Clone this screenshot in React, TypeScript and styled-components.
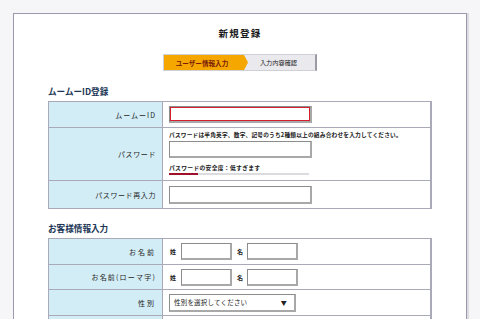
import React from "react";
import styled, { createGlobalStyle } from "styled-components";

const GlobalStyle = createGlobalStyle`
  html, body {
    margin: 0;
    padding: 0;
    background: #f6f6f9;
    font-family: "Noto Sans CJK JP", "Noto Sans", sans-serif;
    color: #1e1e1e;
  }
  #root {
    height: 319px;
    overflow: hidden;
  }
`;

const Card = styled.div`
  margin: 13px 13px 0;
  min-height: 400px;
  background: #fff;
  border: 1px solid #9a9aaa;
  box-shadow: 2px 0 0 #dcdce2;
  padding: 0 34px;
`;

const Title = styled.h1`
  margin: 0;
  padding-top: 12px;
  font-size: 9.5px;
  line-height: 14px;
  font-weight: 700;
  letter-spacing: 1.2px;
  text-align: center;
  color: #1a1a1a;
`;

const Steps = styled.div`
  margin: 14px auto 0;
  width: 154px;
  height: 17px;
  display: flex;
  background: #e9e9ee;
  border: 1px solid #cfcfd6;
  border-right: 2px solid #9a9aa4;
  box-sizing: border-box;
`;

const Step = styled.div<{ $active?: boolean }>`
  display: flex;
  align-items: center;
  justify-content: center;
  height: 100%;
  font-size: ${(p) => (p.$active ? "6.6px" : "6.2px")};
  font-weight: ${(p) => (p.$active ? 700 : 400)};
  color: ${(p) => (p.$active ? "#7a1c08" : "#222")};
  background: ${(p) => (p.$active ? "#f5a700" : "transparent")};
  width: ${(p) => (p.$active ? "84px" : "auto")};
  flex: ${(p) => (p.$active ? "none" : 1)};
  clip-path: ${(p) =>
    p.$active
      ? "polygon(0 0, calc(100% - 4px) 0, 100% 50%, calc(100% - 4px) 100%, 0 100%)"
      : "none"};
  padding-right: ${(p) => (p.$active ? "8px" : "6px")};
  box-sizing: border-box;
`;

const SectionTitle = styled.h2<{ $top: number }>`
  margin: ${(p) => p.$top}px 0 4px;
  font-size: 8.6px;
  line-height: 12px;
  font-weight: 700;
  color: #1b3656;
`;

const FormTable = styled.div`
  border: 1px solid #a9a9b8;
  border-right-width: 2px;
`;

const Row = styled.div<{ $h: number }>`
  display: grid;
  grid-template-columns: 114px 1fr;
  min-height: ${(p) => p.$h}px;
  & + & {
    border-top: 1px solid #a9a9b8;
  }
`;

const Label = styled.div<{ $spread?: number }>`
  background: #d3edf6;
  border-right: 1px solid #a9a9b8;
  display: flex;
  align-items: center;
  justify-content: flex-end;
  padding-right: 6px;
  font-size: 7px;
  letter-spacing: ${(p) => p.$spread ?? 0.6}px;
  color: #1e1e1e;
`;

const Value = styled.div`
  display: flex;
  align-items: center;
  padding: 0 6px;
`;

const Stack = styled.div`
  display: flex;
  flex-direction: column;
  padding: 2px 6px 4px;
`;

const TextBox = styled.div<{ $w: number; $h?: number; $error?: boolean }>`
  width: ${(p) => p.$w}px;
  height: ${(p) => p.$h ?? 17}px;
  box-sizing: border-box;
  background: #fff;
  border: 1px solid #8c8c8c;
  border-right-width: 2px;
  border-bottom-width: 2px;
  border-right-color: #a8a8a8;
  border-bottom-color: #a8a8a8;
  box-shadow: ${(p) => (p.$error ? "inset 0 0 0 1px #d4202e" : "none")};
`;

const Hint = styled.div`
  font-size: 5.7px;
  line-height: 10px;
  letter-spacing: 0.2px;
  font-weight: 700;
  color: #1a1a1a;
  white-space: nowrap;
`;

const Strength = styled.div`
  margin-top: 6px;
  font-size: 5.8px;
  line-height: 8px;
  letter-spacing: 0.3px;
  font-weight: 700;
  color: #1a1a1a;
`;

const Meter = styled.div`
  margin-top: 1px;
  width: 140px;
  height: 2px;
  background: #dcdce0;
  display: flex;
`;

const MeterFill = styled.div`
  height: 100%;
  background: #a0102a;
`;

const Small = styled.span`
  font-size: 6px;
  font-weight: 700;
  color: #222;
  margin: 0 5px 0 1px;
`;

const Select = styled.div`
  width: 127px;
  height: 18px;
  box-sizing: border-box;
  border: 1px solid #8c8c8c;
  border-right-width: 2px;
  border-bottom-width: 2px;
  border-right-color: #a8a8a8;
  border-bottom-color: #a8a8a8;
  display: flex;
  align-items: center;
  justify-content: space-between;
  padding: 0 7px 0 4px;
  font-size: 6.5px;
  letter-spacing: 0.2px;
  color: #1a1a1a;
`;

const Caret = styled.span`
  font-size: 6px;
  color: #222;
`;

export default function App() {
  return (
    <>
      <GlobalStyle />
      <Card>
        <Title>新規登録</Title>
        <Steps>
          <Step $active>ユーザー情報入力</Step>
          <Step>入力内容確認</Step>
        </Steps>

        <SectionTitle $top={14}>ムームーID登録</SectionTitle>
        <FormTable>
          <Row $h={25}>
            <Label $spread={1}>ムームーID</Label>
            <Value>
              <TextBox $w={143} $error />
            </Value>
          </Row>
          <Row $h={52}>
            <Label>パスワード</Label>
            <Stack>
              <Hint>
                パスワードは半角英字、数字、記号のうち2種類以上の組み合わせを入力してください。
              </Hint>
              <TextBox $w={143} style={{ marginTop: 1 }} />
              <Strength>パスワードの安全度：低すぎます</Strength>
              <Meter>
                <MeterFill style={{ width: "21%" }} />
              </Meter>
            </Stack>
          </Row>
          <Row $h={27}>
            <Label>パスワード再入力</Label>
            <Value>
              <TextBox $w={143} $h={18} />
            </Value>
          </Row>
        </FormTable>

        <SectionTitle $top={13}>お客様情報入力</SectionTitle>
        <FormTable>
          <Row $h={25}>
            <Label $spread={2}>お名前</Label>
            <Value>
              <Small>姓</Small>
              <TextBox $w={51} />
              <Small style={{ marginLeft: 5, marginRight: 4 }}>名</Small>
              <TextBox $w={51} />
            </Value>
          </Row>
          <Row $h={24}>
            <Label $spread={1.2}>お名前(ローマ字)</Label>
            <Value>
              <Small>姓</Small>
              <TextBox $w={51} />
              <Small style={{ marginLeft: 5, marginRight: 4 }}>名</Small>
              <TextBox $w={51} />
            </Value>
          </Row>
          <Row $h={25}>
            <Label $spread={2}>性別</Label>
            <Value>
              <Select>
                性別を選択してください
                <Caret>▼</Caret>
              </Select>
            </Value>
          </Row>
          <Row $h={25}>
            <Label />
            <Value />
          </Row>
        </FormTable>
      </Card>
    </>
  );
}
